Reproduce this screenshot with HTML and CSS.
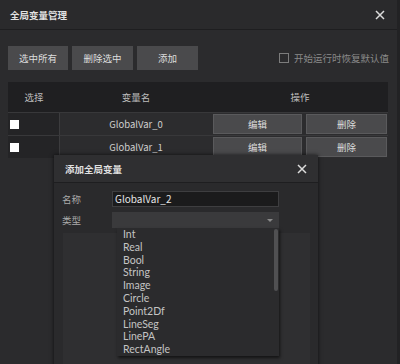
FILE: index.html
```html
<!DOCTYPE html>
<html lang="zh-CN">
<head>
    <meta charset="UTF-8">
    <title>全局变量管理</title>
    <link rel="stylesheet" href="styles.css">
</head>
<body>
    <div class="window">
        <div class="title-bar">
            <span class="title">全局变量管理</span>
            <svg class="close" width="10" height="10" viewBox="0 0 10 10"><path d="M1 1L9 9M9 1L1 9" stroke="#dcdcdc" stroke-width="1.5"/></svg>
        </div>

        <div class="toolbar">
            <button class="btn">选中所有</button>
            <button class="btn">删除选中</button>
            <button class="btn">添加</button>
            <label class="restore"><span class="check-empty"></span>开始运行时恢复默认值</label>
        </div>

        <div class="var-table">
            <div class="head">选择</div>
            <div class="head">变量名</div>
            <div class="head span2">操作</div>

            <div class="cell sel"><span class="check-white"></span></div>
            <div class="cell name">GlobalVar_0</div>
            <div class="cell act"><button class="row-btn">编辑</button></div>
            <div class="cell act last"><button class="row-btn">删除</button></div>

            <div class="cell sel"><span class="check-white"></span></div>
            <div class="cell name">GlobalVar_1</div>
            <div class="cell act"><button class="row-btn">编辑</button></div>
            <div class="cell act last"><button class="row-btn">删除</button></div>
        </div>

        <div class="dialog">
            <div class="dialog-title">
                <span>添加全局变量</span>
                <svg class="close" width="10" height="10" viewBox="0 0 10 10"><path d="M1 1L9 9M9 1L1 9" stroke="#dcdcdc" stroke-width="1.5"/></svg>
            </div>
            <div class="dialog-body">
                <div class="field">
                    <span class="label">名称</span>
                    <div class="input">GlobalVar_2</div>
                </div>
                <div class="field">
                    <span class="label">类型</span>
                    <div class="select"><span class="arrow"></span></div>
                </div>
                <div class="panel"></div>

                <ul class="dropdown">
                    <li>Int</li>
                    <li>Real</li>
                    <li>Bool</li>
                    <li>String</li>
                    <li>Image</li>
                    <li>Circle</li>
                    <li>Point2Df</li>
                    <li>LineSeg</li>
                    <li>LinePA</li>
                    <li>RectAngle</li>
                    <span class="scrollbar"></span>
                </ul>
            </div>
        </div>
    </div>
</body>
</html>
```

FILE: styles.css
```css
body {
    margin: 0;
    width: 400px;
    height: 364px;
    overflow: hidden;
    background-color: #2b2b2d;
    font-family: "Noto Sans CJK SC", sans-serif;
    font-size: 9.5px;
    color: #d8d8d8;
}

.window {
    position: relative;
    height: 364px;
    border-right: 3px solid #222224;
    box-sizing: border-box;
    background-color: #2b2b2d;
}

.title-bar {
    height: 29px;
    display: flex;
    align-items: center;
    justify-content: space-between;
    padding: 0 12px 0 10px;
    background-color: #2a2a2c;
    border-bottom: 1px solid #1e1e20;
}

.title {
    color: #e2e2e2;
    font-weight: bold;
}

.toolbar {
    display: flex;
    align-items: center;
    gap: 4px;
    padding: 16px 8px 0 8px;
}

.btn {
    width: 61px;
    height: 24px;
    background-color: #4a4a4c;
    color: #dedede;
    border: none;
    font: inherit;
    padding: 0;
}

.btn:first-child {
    width: 60px;
}

.restore {
    margin-left: auto;
    display: flex;
    align-items: center;
    gap: 5px;
    color: #8a8a8a;
}

.check-empty {
    width: 8px;
    height: 8px;
    border: 1px solid #7c7c7c;
}

.var-table {
    display: grid;
    grid-template-columns: 52px 152px 90px 86px;
    grid-template-rows: 30px 22px 22px;
    row-gap: 1px;
    margin: 12px 9px 0 8px;
    background-color: #38383a;
}

.head {
    display: flex;
    align-items: center;
    justify-content: center;
    background-color: #1f1f21;
    color: #bdbdbd;
}

.span2 {
    grid-column: span 2;
}

.cell {
    display: flex;
    align-items: center;
    background-color: #2c2c2e;
}

.sel {
    background-color: #242426;
    padding-left: 2px;
    border-right: 1px solid #3c3c3e;
}

.check-white {
    width: 9px;
    height: 9px;
    background-color: #ffffff;
}

.name {
    justify-content: center;
    color: #cfcfcf;
}

.act {
    padding: 1px 0 1px 1px;
}

.act.last {
    padding-left: 4px;
    padding-right: 1px;
}

.row-btn {
    width: 100%;
    height: 100%;
    background-color: #4a4a4c;
    border: 1px solid #5a5a5c;
    color: #dcdcdc;
    font: inherit;
    padding: 0;
}

.dialog {
    position: absolute;
    left: 54px;
    top: 155px;
    width: 264px;
    height: 215px;
    background-color: #2a2a2c;
    box-shadow: 0 0 4px rgba(0, 0, 0, 0.7);
}

.dialog-title {
    height: 27px;
    display: flex;
    align-items: center;
    justify-content: space-between;
    padding: 0 11px 0 11px;
    background-color: #2f2f31;
    border-bottom: 1px solid #1e1e20;
    color: #e0e0e0;
    font-weight: bold;
}

.dialog-body {
    position: relative;
    padding: 8px 8px 0 8px;
}

.field {
    display: flex;
    align-items: center;
    height: 16px;
    margin-bottom: 5px;
}

.label {
    width: 50px;
    color: #aaaaaa;
}

.input {
    flex: 0 0 167px;
    height: 16px;
    box-sizing: border-box;
    background-color: #1b1b1c;
    border: 1px solid #3e3e40;
    color: #e6e6e6;
    font-size: 10px;
    line-height: 14px;
    padding-left: 2px;
}

.select {
    position: relative;
    flex: 0 0 167px;
    height: 16px;
    background-color: #3a3a3c;
}

.arrow {
    position: absolute;
    right: 6px;
    top: 7px;
    border-left: 3px solid transparent;
    border-right: 3px solid transparent;
    border-top: 3px solid #8a8a8a;
}

.panel {
    margin: 1px 0 0 1px;
    height: 140px;
    background-color: #2f2f31;
}

.dropdown {
    position: absolute;
    left: 63px;
    top: 45px;
    width: 162px;
    margin: 0;
    padding: 0;
    list-style: none;
    background-color: #2b2b2d;
    box-shadow: 1px 2px 3px rgba(0, 0, 0, 0.6);
}

.dropdown li {
    height: 12.8px;
    line-height: 12.8px;
    padding-left: 6px;
    color: #c4c4c4;
    font-family: Lato, "Noto Sans CJK SC", sans-serif;
    font-size: 10.5px;
}

.scrollbar {
    position: absolute;
    right: 1px;
    top: 1px;
    width: 4px;
    height: 62px;
    border-radius: 2px;
    background-color: #505052;
}
```
